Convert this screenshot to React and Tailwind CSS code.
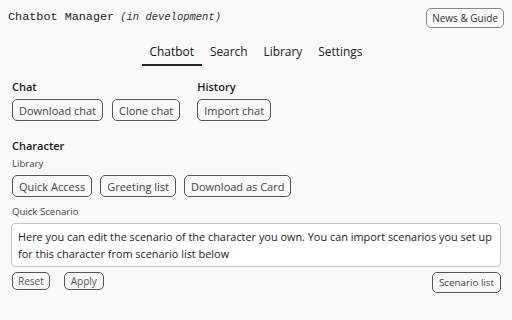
import { useState } from 'react';

const btn =
  'h-[22px] px-[6px] rounded-[5px] border border-[#555] bg-transparent text-[11px] text-[#444] leading-none flex items-center';

export default function App() {
  const [tab, setTab] = useState('Chatbot');
  const tabs = ['Chatbot', 'Search', 'Library', 'Settings'];

  return (
    <div className="h-[320px] w-full bg-[#f9f9f9] text-[#1a1a1a] font-['Open_Sans',sans-serif] overflow-hidden">
      {/* Header */}
      <div className="flex items-center justify-between px-2 pt-2">
        <div className="flex items-baseline gap-[6px] font-['Liberation_Mono',monospace]">
          <span className="text-[11.8px] text-[#222]">Chatbot Manager</span>
          <span className="text-[10.5px] italic text-[#333]">(in development)</span>
        </div>
        <button className="h-[20px] px-[5px] rounded-[5px] border border-[#888] text-[10px] text-[#333] leading-none">
          News &amp; Guide
        </button>
      </div>

      {/* Tabs */}
      <div className="flex justify-center mt-[10px]">
        {tabs.map((t) => (
          <button
            key={t}
            onClick={() => setTab(t)}
            className={
              'h-[28px] px-2 text-[11.9px] flex items-center border-b-2 pt-px ' +
              (tab === t ? 'border-[#222] text-[#111]' : 'border-transparent text-[#222]')
            }
          >
            {t}
          </button>
        ))}
      </div>

      <div className="px-3 mt-[11px]">
        {/* Chat / History */}
        <div className="flex gap-[17px]">
          <div>
            <div className="text-[11px] font-semibold h-[20px] flex items-center">Chat</div>
            <div className="flex gap-[9px] mt-[2px]">
              <button className={btn}>Download chat</button>
              <button className={btn}>Clone chat</button>
            </div>
          </div>
          <div>
            <div className="text-[11px] font-semibold h-[20px] flex items-center">History</div>
            <div className="flex gap-[9px] mt-[2px]">
              <button className={btn}>Import chat</button>
            </div>
          </div>
        </div>

        {/* Character */}
        <div className="mt-[15px]">
          <div className="text-[11px] font-semibold h-[20px] flex items-center">Character</div>
          <div className="text-[9.6px] text-[#444] h-[16px] flex items-center">Library</div>
          <div className="flex gap-[8px] mt-[3px]">
            <button className={btn}>Quick Access</button>
            <button className={btn}>Greeting list</button>
            <button className={btn}>Download as Card</button>
          </div>

          <div className="text-[9.6px] text-[#444] h-[16px] flex items-center mt-[7px]">
            Quick Scenario
          </div>
          <div className="mt-[3px] -ml-px w-[490px] h-[44px] rounded-[4px] border border-[#c4c4c4] bg-white px-[6px] py-[4px] text-[10.9px] leading-[17px] text-[#222]">
            Here you can edit the scenario of the character you own. You can import scenarios you set up
            for this character from scenario list below
          </div>
          <div className="flex items-start justify-between mt-[5px] w-[489px]">
            <div className="flex gap-[14px]">
              <button className="h-[18px] px-[5px] rounded-[5px] border border-[#555] text-[10px] text-[#555] leading-none">
                Reset
              </button>
              <button className="h-[18px] px-[6px] rounded-[5px] border border-[#555] text-[10px] text-[#555] leading-none">
                Apply
              </button>
            </div>
            <button className="h-[21px] px-[6px] rounded-[5px] border border-[#555] text-[9.8px] text-[#444] leading-none">
              Scenario list
            </button>
          </div>
        </div>
      </div>
    </div>
  );
}
